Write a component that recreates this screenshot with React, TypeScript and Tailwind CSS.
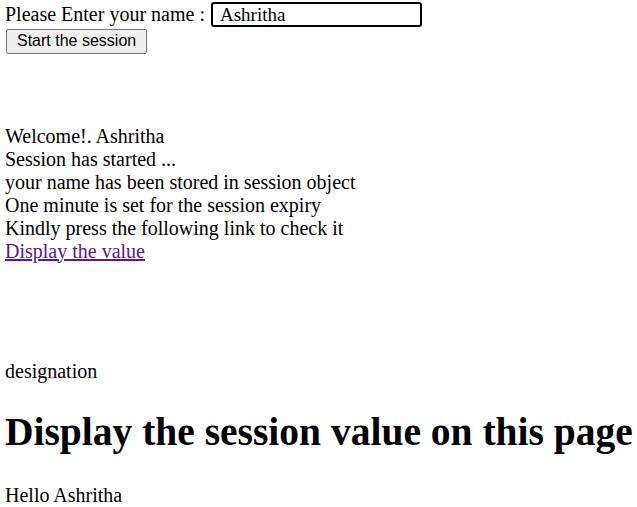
export default function App() {
  const serif = { fontFamily: '"Liberation Serif", "Times New Roman", serif' };
  return (
    <div className="bg-white text-black w-[637px] h-[507px] overflow-hidden pl-[5px] text-[20px] leading-[23px]" style={serif}>
      <div className="flex items-center pt-[2px] h-[27px]">
        <span className="mr-[6px]">Please Enter your name :</span>
        <div className="w-[211px] h-[25px] border-2 border-black rounded-[3px] flex items-center pl-[7px] text-[19px]">
          Ashritha
        </div>
      </div>
      <div className="ml-[1px] mt-[1px]">
        <button
          className="h-[25px] px-[10px] border border-[#767676] rounded-[2px] bg-[#efefef] text-[16px] leading-[20px]"
          style={{ fontFamily: '"Liberation Sans", Arial, sans-serif' }}
        >
          Start the session
        </button>
      </div>
      <div className="mt-[71px]">
        <div>Welcome!. Ashritha</div>
        <div>Session has started ...</div>
        <div>your name has been stored in session object</div>
        <div>One minute is set for the session expiry</div>
        <div>Kindly press the following link to check it</div>
        <div>
          <a href="#" className="text-[#551a8b] underline">Display the value</a>
        </div>
      </div>
      <div className="mt-[97px]">designation</div>
      <h1 className="text-[39.5px] leading-[46px] font-bold whitespace-nowrap mt-[26px]">Display the session value on this page</h1>
      <div className="mt-[29px]">Hello Ashritha</div>
    </div>
  );
}
